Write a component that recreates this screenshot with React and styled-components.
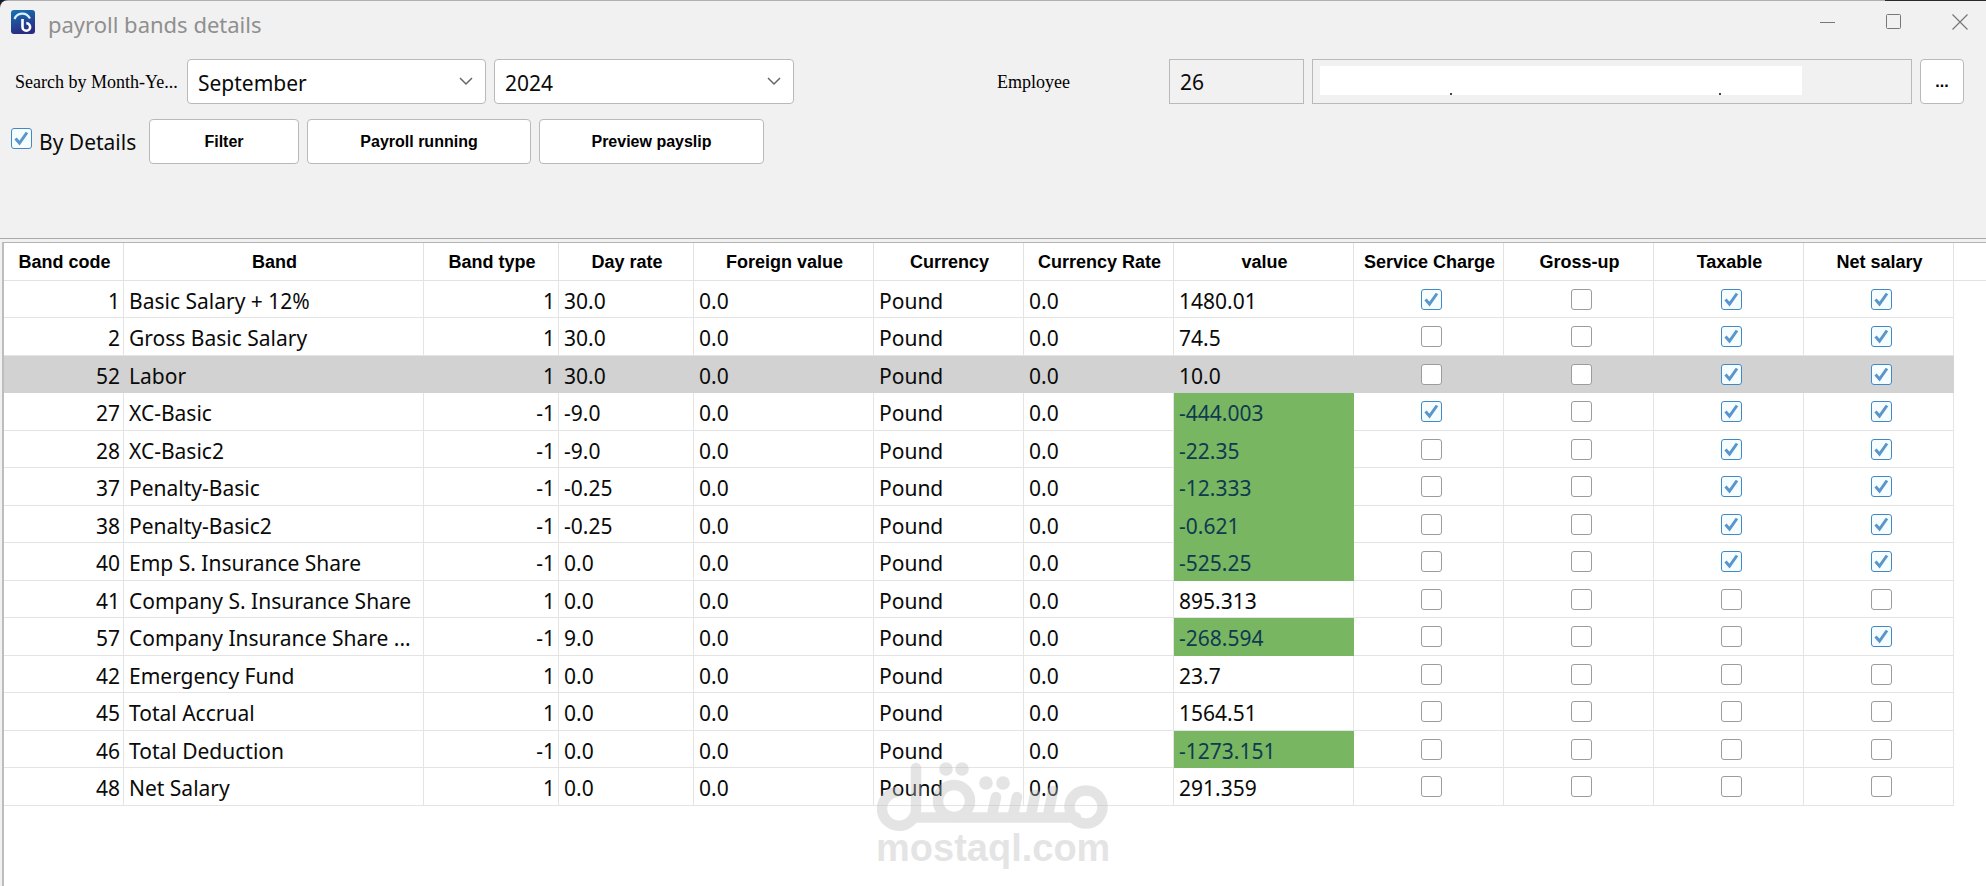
import React, { useState } from "react";
import styled, { createGlobalStyle } from "styled-components";

const GlobalStyle = createGlobalStyle`
  *, *::before, *::after { box-sizing: border-box; }
  html, body, #root { height: 100%; }
  body { margin: 0; background: #1b1b2c; }
`;

const ui = `"Noto Sans", "Open Sans", sans-serif`;
const arial = `"Liberation Sans", Arial, sans-serif`;
const times = `"Liberation Serif", "Times New Roman", serif`;

const Window = styled.div`
  min-height: 100%;
  display: flex;
  flex-direction: column;
  padding-top: 1px;
  background: linear-gradient(to right, #b0b0b0 calc(100% - 101px), #2b282c 0) top / 100% 1px no-repeat #f1f1f1;
  border-top-left-radius: 8px;
  color: #0a0a0a;
  font: 21px/28px ${ui};
`;

const TitleBar = styled.header`
  display: flex;
  align-items: center;
  height: 41px;
  padding: 0 18px 0 11px;
  svg { display: block; }
`;

const Title = styled.h1`
  flex: 1;
  margin: 4px 0 0 13px;
  font: 400 22px/28px ${ui};
  color: #8f8f8f;
`;

const Controls = styled.div`
  display: flex;
  gap: 50px;
`;

const ControlButton = styled.button`
  width: 16px;
  height: 16px;
  padding: 0;
  border: 0;
  background: none;
`;

const Toolbar = styled.section`
  display: flex;
  flex-direction: column;
  gap: 15px;
  height: 197px;
  padding: 17px 22px 0 11px;
  border-bottom: 1px solid #a9a9a9;
`;

const ToolRow = styled.div`
  display: flex;
  align-items: center;
  gap: 8px;
`;

const FieldLabel = styled.label`
  width: ${(p) => p.$width}px;
  padding-left: 4px;
  overflow: hidden;
  white-space: nowrap;
  font: 18px/24px ${times};
  color: #000;
`;

const SelectBox = styled.span`
  display: grid;
  align-items: center;
  width: ${(p) => p.$width}px;
  > * { grid-area: 1 / 1; }
  svg { justify-self: end; margin-right: 13px; pointer-events: none; }
`;

const Select = styled.select`
  appearance: none;
  width: 100%;
  height: 45px;
  padding: 2px 40px 0 10px;
  border: 1px solid #b9b9b9;
  border-radius: 4px;
  background: #fff;
  color: #0a0a0a;
  font: 21px/28px ${ui};
`;

const Employee = styled.div`
  display: flex;
  align-items: center;
  gap: 8px;
  margin-left: auto;
`;

const ReadOnly = styled.input`
  width: ${(p) => p.$width}px;
  height: 45px;
  padding: 0 10px;
  border: 1px solid #b9b9b9;
  background: #f1f1f1;
  color: #0a0a0a;
  font: 21px/28px ${ui};
`;

const NameField = styled.span`
  display: grid;
  align-items: start;
  > * { grid-area: 1 / 1; }
`;

const Cover = styled.span`
  display: flex;
  align-items: flex-end;
  justify-content: space-between;
  width: 482px;
  height: 29px;
  margin: 7px 0 0 8px;
  padding: 0 81px 0 130px;
  background: #fff;
  i { width: 2px; height: 2px; background: #444; }
`;

const Button = styled.button`
  width: ${(p) => p.$width}px;
  height: 45px;
  padding: 0;
  border: 1px solid #b9b9b9;
  border-radius: 4px;
  background: #fff;
  color: #000;
  font: 700 16px/20px ${arial};
`;

const CheckLabel = styled.label`
  display: flex;
  align-items: flex-start;
  gap: 7px;
  width: 130px;
  white-space: nowrap;
`;

const tick = `url("data:image/svg+xml,%3Csvg xmlns='http://www.w3.org/2000/svg' viewBox='0 0 21 21'%3E%3Cpath d='M4.5 10.5l4 4.5 7.5-10.5' fill='none' stroke='%235a96cc' stroke-width='3'/%3E%3C/svg%3E")`;

const Check = styled.input`
  appearance: none;
  display: block;
  width: 21px;
  height: 21px;
  margin: 0;
  border: 1px solid #9c9c9c;
  border-radius: 3px;
  background: #fff;
  &:checked {
    border-color: #4288c4;
    background: #f6fdff ${tick} center / 21px 21px no-repeat;
  }
`;

const GridPane = styled.main`
  flex: 1;
  margin-top: 3px;
  border-top: 1px solid #b4b4b4;
  border-left: 2px solid #bdbdbd;
  margin-left: 2px;
  background: #fff;
`;

const Table = styled.table`
  width: 100%;
  table-layout: fixed;
  border-collapse: separate;
  border-spacing: 0;
`;

const HeadCell = styled.th`
  height: 38px;
  padding: 0 0 0 2px;
  border-right: 1px solid #e2e2e2;
  border-bottom: 1px solid #e2e2e2;
  color: #000;
  font: 700 18px/24px ${arial};
  white-space: nowrap;
  &:last-child { border-right: 0; }
`;

const Row = styled.tr`
  height: 37px;
  &:nth-child(even) { height: 38px; }
`;

const Cell = styled.td`
  height: inherit;
  padding: ${(p) => (p.$end ? "3px 3px 0 0" : "3px 0 0 5px")};
  border-right: 1px solid #e4e4e4;
  border-bottom: 1px solid #e4e4e4;
  background: ${(p) => (p.$selected ? "#d2d2d2" : p.$negative ? "#79b661" : "transparent")};
  ${(p) => p.$selected && "border-color: #d2d2d2;"}
  ${(p) => p.$negative && "border-color: #79b661; color: #0f3a50;"}
  text-align: ${(p) => (p.$end ? "right" : "left")};
  line-height: 28px;
  white-space: nowrap;
`;

const CheckCell = styled(Cell)`
  padding: 0 0 0 5px;
  input { margin: 0 auto; }
`;

const Watermark = styled.div`
  position: absolute;
  left: 876px;
  top: 762px;
  opacity: 0.39;
  color: #bcbcbc;
  pointer-events: none;
  font: 700 38px/44px ${arial};
  svg { display: block; }
`;

const columns = [
  ["Band code", 120], ["Band", 300], ["Band type", 135], ["Day rate", 135],
  ["Foreign value", 180], ["Currency", 150], ["Currency Rate", 150], ["value", 180],
  ["Service Charge", 150], ["Gross-up", 150], ["Taxable", 150], ["Net salary", 150],
];

const rows = [
  [1, "Basic Salary + 12%", 1, "30.0", "1480.01", 1, 0, 1, 1],
  [2, "Gross Basic Salary", 1, "30.0", "74.5", 0, 0, 1, 1],
  [52, "Labor", 1, "30.0", "10.0", 0, 0, 1, 1],
  [27, "XC-Basic", -1, "-9.0", "-444.003", 1, 0, 1, 1],
  [28, "XC-Basic2", -1, "-9.0", "-22.35", 0, 0, 1, 1],
  [37, "Penalty-Basic", -1, "-0.25", "-12.333", 0, 0, 1, 1],
  [38, "Penalty-Basic2", -1, "-0.25", "-0.621", 0, 0, 1, 1],
  [40, "Emp S. Insurance Share", -1, "0.0", "-525.25", 0, 0, 1, 1],
  [41, "Company S. Insurance Share", 1, "0.0", "895.313", 0, 0, 0, 0],
  [57, "Company Insurance Share ...", -1, "9.0", "-268.594", 0, 0, 0, 1],
  [42, "Emergency Fund", 1, "0.0", "23.7", 0, 0, 0, 0],
  [45, "Total Accrual", 1, "0.0", "1564.51", 0, 0, 0, 0],
  [46, "Total Deduction", -1, "0.0", "-1273.151", 0, 0, 0, 0],
  [48, "Net Salary", 1, "0.0", "291.359", 0, 0, 0, 0],
];

const flagNames = ["Service Charge", "Gross-up", "Taxable", "Net salary"];

function Logo() {
  return (
    <svg width="24" height="24" viewBox="0 0 24 24" aria-hidden="true">
      <defs>
        <linearGradient id="logoFill" x1="0" y1="0" x2="0.3" y2="1">
          <stop offset="0" stopColor="#1673b4" />
          <stop offset="1" stopColor="#2a2c83" />
        </linearGradient>
      </defs>
      <rect width="24" height="24" rx="3" fill="url(#logoFill)" />
      <path d="M3.5 9C6 2.500 15 1.500 19 8.500" fill="none" stroke="#d9f3ff" strokeWidth="2.200" />
      <path d="M11.500 9v8a3.800 3.800 0 1 0 3.800-3.800" fill="none" stroke="#fff" strokeWidth="2.600" />
    </svg>
  );
}

function Chevron() {
  return (
    <svg width="14" height="9" viewBox="0 0 14 9" aria-hidden="true">
      <path d="M1 1l6 6 6-6" fill="none" stroke="#666" strokeWidth="1.5" />
    </svg>
  );
}

function Picker({ id, options, width, ...rest }) {
  return (
    <SelectBox $width={width}>
      <Select id={id} defaultValue={options[0]} {...rest}>
        {options.map((o) => <option key={o}>{o}</option>)}
      </Select>
      <Chevron />
    </SelectBox>
  );
}

export default function App() {
  const [selected, setSelected] = useState(52);
  return (
    <Window>
      <GlobalStyle />
      <TitleBar>
        <Logo />
        <Title>payroll bands details</Title>
        <Controls>
          <ControlButton aria-label="Minimize">
            <svg width="16" height="16"><path d="M0 8.5h15" stroke="#777" /></svg>
          </ControlButton>
          <ControlButton aria-label="Maximize">
            <svg width="16" height="16"><rect x="0.5" y="0.5" width="14" height="14" rx="1" fill="none" stroke="#777" /></svg>
          </ControlButton>
          <ControlButton aria-label="Close">
            <svg width="16" height="16"><path d="M0.5 0.5l15 15M15.5 0.5l-15 15" stroke="#777" strokeWidth="1.2" /></svg>
          </ControlButton>
        </Controls>
      </TitleBar>
      <Toolbar>
        <ToolRow>
          <FieldLabel $width={168} htmlFor="month">Search by Month-Ye...</FieldLabel>
          <Picker id="month" width={299} options={["September", "October", "November", "December"]} />
          <Picker id="year" width={300} aria-label="Year" options={["2024", "2023", "2022"]} />
          <Employee>
            <FieldLabel $width={168} htmlFor="employee">Employee</FieldLabel>
            <ReadOnly id="employee" $width={135} readOnly value="26" />
            <NameField>
              <ReadOnly aria-label="Employee name" $width={600} readOnly value="" />
              <Cover aria-hidden="true"><i /><i /></Cover>
            </NameField>
            <Button $width={44} aria-label="Choose employee">...</Button>
          </Employee>
        </ToolRow>
        <ToolRow>
          <CheckLabel><Check type="checkbox" defaultChecked />By Details</CheckLabel>
          <Button $width={150}>Filter</Button>
          <Button $width={224}>Payroll running</Button>
          <Button $width={225}>Preview payslip</Button>
        </ToolRow>
      </Toolbar>
      <GridPane>
        <Table>
          <colgroup>
            {columns.map(([name, width]) => <col key={name} width={width} />)}
            <col />
          </colgroup>
          <thead>
            <tr>
              {columns.map(([name]) => <HeadCell key={name} scope="col">{name}</HeadCell>)}
              <HeadCell as="td" />
            </tr>
          </thead>
          <tbody>
            {rows.map(([code, band, type, rate, value, ...flags]) => {
              const on = code === selected;
              return (
                <Row key={code} onClick={() => setSelected(code)}>
                  <Cell $end $selected={on}>{code}</Cell>
                  <Cell $selected={on}>{band}</Cell>
                  <Cell $end $selected={on}>{type}</Cell>
                  <Cell $selected={on}>{rate}</Cell>
                  <Cell $selected={on}>0.0</Cell>
                  <Cell $selected={on}>Pound</Cell>
                  <Cell $selected={on}>0.0</Cell>
                  <Cell $selected={on} $negative={value.startsWith("-")}>{value}</Cell>
                  {flags.map((f, i) => (
                    <CheckCell key={flagNames[i]} $selected={on}>
                      <Check type="checkbox" defaultChecked={!!f} aria-label={`${flagNames[i]}, ${band}`} />
                    </CheckCell>
                  ))}
                </Row>
              );
            })}
          </tbody>
        </Table>
      </GridPane>
      <Watermark>
        <svg width="232" height="64" viewBox="0 0 232 64" overflow="visible" aria-hidden="true">
          <g fill="none" stroke="#bcbcbc" strokeWidth="10.5" strokeLinecap="round">
            <path d="M40 6v40a17 17 0 1 1-20-16" />
            <path d="M38 55.500h162" />
            <circle cx="78" cy="39" r="16" />
            <circle cx="210" cy="45" r="16.500" />
            <path d="M120 35l-4 18M141 35l-4 18M159 33l-4 20M177 29l-5 24" />
          </g>
          <g fill="#bcbcbc">
            <circle cx="70" cy="7" r="6.800" />
            <circle cx="86" cy="7" r="6.800" />
            <circle cx="110" cy="21" r="6.800" />
            <circle cx="127" cy="21" r="6.800" />
          </g>
        </svg>
        mostaql.com
      </Watermark>
    </Window>
  );
}
